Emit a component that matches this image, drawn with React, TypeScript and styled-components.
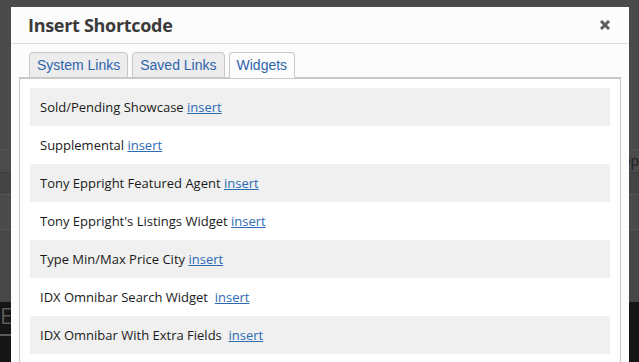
import styled, {createGlobalStyle} from 'styled-components';

const Global = createGlobalStyle`
  html, body {
    margin: 0;
    padding: 0;
    background: #4b4b4b;
  }
`;

const Screen = styled.div`
  position: relative;
  width: 639px;
  height: 362px;
  overflow: hidden;
  background: #4b4b4b;
  font-family: 'Open Sans', sans-serif;
`;

const Backdrop = styled.div`
  display: flex;
  flex-direction: column;
  height: 100%;
`;

const Band = styled.div<{$h: number; $bg: string; $line?: string}>`
  height: ${p => p.$h}px;
  flex-shrink: 0;
  background: ${p => p.$bg};
  border-top: ${p => (p.$line ? `1px solid ${p.$line}` : 'none')};
  box-sizing: border-box;
  display: flex;
  justify-content: space-between;
  align-items: center;
`;

const BgText = styled.span<{$color: string; $size: number}>`
  color: ${p => p.$color};
  font-size: ${p => p.$size}px;
  line-height: 1;
`;

const Footer = styled.div`
  flex: 1;
  background: #151515;
  display: flex;
  flex-direction: column;
  padding-top: 2px;
  gap: 8px;
`;

const FooterLine = styled.div`
  height: 2px;
  width: 20px;
  background: #5a5a5a;
`;

const Modal = styled.div`
  position: absolute;
  left: 11px;
  top: 7px;
  width: 618px;
  bottom: -20px;
  background: #fcfcfc;
  display: flex;
  flex-direction: column;
  overflow: hidden;
`;

const Header = styled.div`
  flex-shrink: 0;
  height: 36px;
  border-bottom: 1px solid #dcdcdc;
  display: flex;
  align-items: center;
  justify-content: space-between;
  padding: 0 18px 0 17px;
`;

const Title = styled.h1`
  margin: 0;
  font-family: 'Open Sans', sans-serif;
  font-weight: 700;
  font-size: 18px;
  color: #3a3a3a;
  letter-spacing: -0.3px;
`;

const Close = styled.button`
  border: none;
  background: none;
  padding: 0;
  width: 12px;
  height: 12px;
  display: flex;
  cursor: pointer;
`;

const Body = styled.div`
  flex: 1;
  padding: 8px 8px 0 8px;
  display: flex;
  flex-direction: column;
`;

const Tabs = styled.div`
  flex-shrink: 0;
  display: flex;
  gap: 4px;
  padding-left: 10px;
  margin-bottom: -1px;
  position: relative;
  z-index: 1;
`;

const Tab = styled.div<{$active?: boolean}>`
  height: 26px;
  box-sizing: border-box;
  padding: 0 7px;
  border: 1px solid #c8c8c8;
  border-bottom: 1px solid ${p => (p.$active ? '#fcfcfc' : '#c8c8c8')};
  border-radius: 4px 4px 0 0;
  background: ${p => (p.$active ? '#fcfcfc' : '#ececec')};
  font-family: 'Liberation Sans', Arial, sans-serif;
  font-size: 14px;
  color: #2d64ad;
  display: flex;
  align-items: center;
`;

const Panel = styled.div`
  flex: 1;
  border: 1px solid #c8c8c8;
  border-top-width: 2px;
  background: #fff;
  padding: 9px 10px 0 10px;
  display: flex;
  flex-direction: column;
`;

const Row = styled.div<{$shaded: boolean}>`
  flex-shrink: 0;
  height: 38px;
  background: ${p => (p.$shaded ? '#f0f0f0' : '#ffffff')};
  display: flex;
  align-items: center;
  padding-left: 10px;
  font-family: 'Open Sans', sans-serif;
  font-size: 13px;
  color: #1a1a1a;
  white-space: pre;
`;

const Insert = styled.a`
  color: #2d6cb5;
  text-decoration: underline;
  cursor: pointer;
`;

const widgets = [
  'Sold/Pending Showcase ',
  'Supplemental ',
  'Tony Eppright Featured Agent ',
  "Tony Eppright's Listings Widget ",
  'Type Min/Max Price City ',
  'IDX Omnibar Search Widget  ',
  'IDX Omnibar With Extra Fields  ',
];

export default function App() {
  return (
    <Screen>
      <Global />
      <Backdrop>
        <Band $h={149} $bg="#4a4a4a" />
        <Band $h={23} $bg="#4b4b4b" $line="#555">
          <span />
          <BgText $color="#1e1e1e" $size={14}>op</BgText>
        </Band>
        <Band $h={22} $bg="#444444" $line="#3e3e3e" />
        <Band $h={35} $bg="#4a4a4a" $line="#555" />
        <Band $h={73} $bg="#474747" $line="#555" />
        <Footer>
          <BgText $color="#5c5c5c" $size={22}>E</BgText>
          <FooterLine />
        </Footer>
      </Backdrop>
      <Modal>
        <Header>
          <Title>Insert Shortcode</Title>
          <Close aria-label="close">
            <svg width="12" height="12" viewBox="0 0 12 12">
              <path d="M2 2 L10 10 M10 2 L2 10" stroke="#5e5e5e" strokeWidth="3" />
            </svg>
          </Close>
        </Header>
        <Body>
          <Tabs>
            <Tab>System Links</Tab>
            <Tab>Saved Links</Tab>
            <Tab $active>Widgets</Tab>
          </Tabs>
          <Panel>
            {widgets.map((w, i) => (
              <Row key={w} $shaded={i % 2 === 0}>
                {w}
                <Insert>insert</Insert>
              </Row>
            ))}
          </Panel>
        </Body>
      </Modal>
    </Screen>
  );
}
